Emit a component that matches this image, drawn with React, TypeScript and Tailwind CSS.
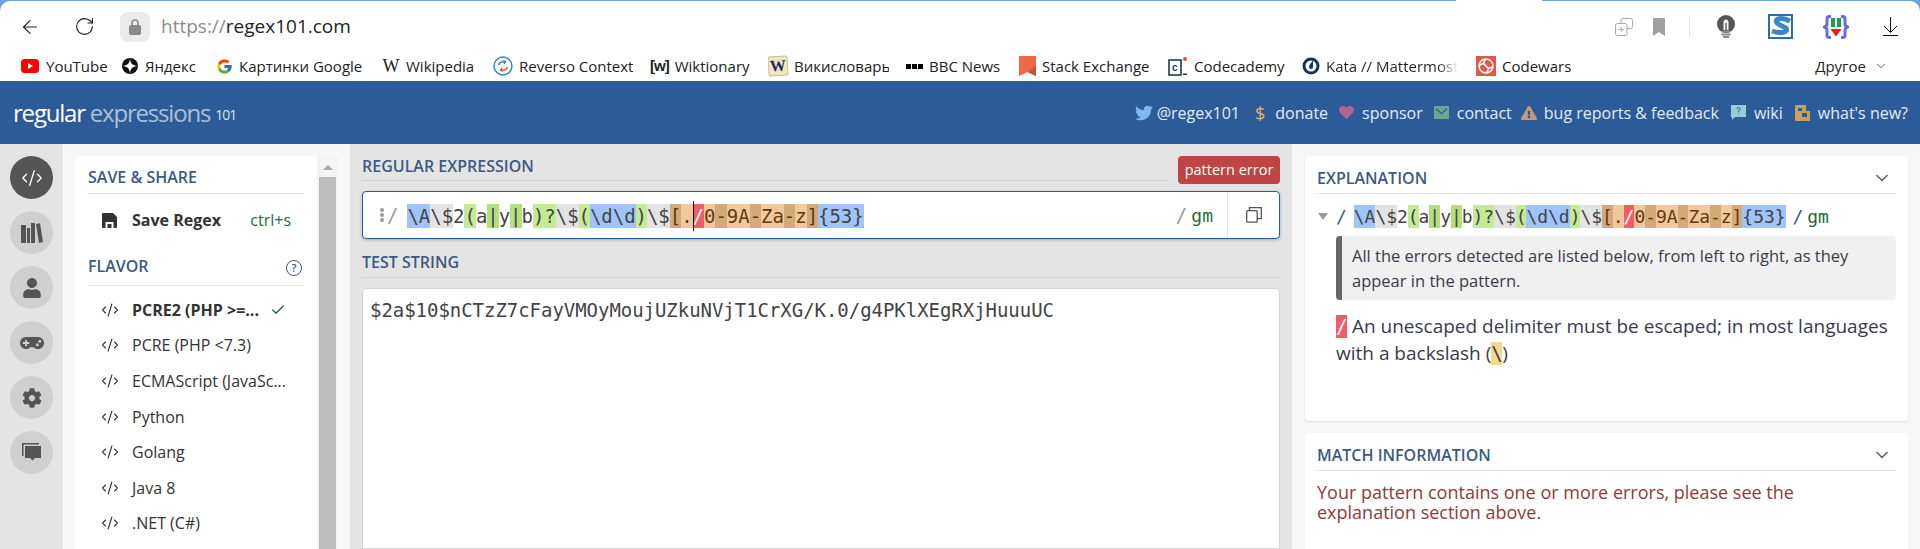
import React from "react";
import { ArrowLeft, RotateCw, ChevronDown, Check, CodeXml } from "lucide-react";
import { FaTwitter, FaHeart, FaUser, FaCog, FaGamepad, FaExclamationTriangle } from "react-icons/fa";
import { FcGoogle } from "react-icons/fc";

const sans = "font-['Open_Sans',sans-serif]";
const mono = "font-['DejaVu_Sans_Mono',monospace]";

const blue = "bg-[#9fc3fb]";
const gray = "bg-[#e3e3e3]";
const green = "bg-[#c5ea94]";
const dark = "bg-[#d5a878] text-[#5f3a10]";
const light = "bg-[#f0c89c] text-[#5f3a10]";
const red = "bg-[#f25c68] text-white";

const tokens: [string, string][] = [
  ["\\A", blue], ["\\$", gray], ["2", ""], ["(", green], ["a", ""], ["|", "bg-[#b4df7c]"], ["y", ""], ["|", "bg-[#b4df7c]"], ["b", ""],
  [")?", green], ["\\$", gray], ["(", green], ["\\d\\d", blue], [")", green], ["\\$", gray],
  ["[", dark], [".", light], ["/", red], ["0", light], ["-", dark], ["9A", light], ["-", dark], ["Za", light], ["-", dark], ["z", light], ["]", dark],
  ["{53}", blue],
];

const Regex = ({ cursor }: { cursor?: boolean }) => (
  <span className="whitespace-pre">
    {tokens.map(([t, c], i) => (
      <span key={i} className={`relative inline-block ${c}`}>
        {cursor && i === 17 && <span className="absolute left-0 top-[-3px] bottom-[-3px] w-px bg-black" />}
        {t}
      </span>
    ))}
  </span>
);

const bookmarks: { label: string; cls: string; labelCls?: string; icon: React.ReactNode }[] = [
  {
    label: "YouTube",
    cls: "ml-[20px] w-[90px]",
    icon: (
      <svg width="20" height="16" viewBox="0 0 20 16">
        <rect x="1" y="1" width="18" height="14" rx="3.5" fill="#f00" />
        <path d="M8 5l5 3-5 3z" fill="#fff" />
      </svg>
    ),
  },
  {
    label: "Яндекс",
    cls: "ml-[11px] w-[77px]",
    icon: (
      <svg width="18" height="18" viewBox="0 0 18 18">
        <circle cx="9" cy="9" r="8" fill="#111" />
        <path d="M9 1.5C9.5 6.5 11.5 8.5 16.5 9 11.5 9.5 9.5 11.5 9 16.5 8.5 11.5 6.500 9.5 1.500 9 6.500 8.500 8.500 6.500 9 1.500z" fill="#fff" />
      </svg>
    ),
  },
  { label: "Картинки Google", cls: "ml-[18px] w-[150px]", icon: <FcGoogle size={17} /> },
  {
    label: "Wikipedia",
    cls: "ml-[16px] w-[94px]",
    icon: <span className="font-['Liberation_Serif',serif] text-[18px] text-[#222] w-[18px] text-center">W</span>,
  },
  {
    label: "Reverso Context",
    cls: "ml-[17px] w-[141px]",
    icon: (
      <svg width="20" height="20" viewBox="0 0 20 20" fill="none">
        <circle cx="10" cy="10" r="9" stroke="#2a86c8" strokeWidth="1.4" />
        <path d="M5 9c.500-3 3-4.500 6-3.500L9.500 3.800l3.800 1.800-2 3.200-.5-2C8.500 6 6.800 7 6.500 9z" fill="#2a6fb5" />
        <path d="M15 11c-.500 3-3 4.500-6 3.500l1.500 1.700-3.800-1.800 2-3.200.5 2c2.300.8 4-.2 4.300-2.200z" fill="#e0452f" />
      </svg>
    ),
  },
  {
    label: "Wiktionary",
    cls: "ml-[16px] w-[102px]",
    icon: <span className="font-['Liberation_Sans',sans-serif] text-[15px] font-bold tracking-[-1px] text-[#222]">[w]</span>,
  },
  {
    label: "Викисловарь",
    cls: "ml-[16px] w-[121px]",
    icon: (
      <span className="flex w-[20px] h-[20px] items-center justify-center bg-[#efe6c0] border border-[#c9bd8f] rotate-[-4deg] rounded-[2px] font-['Liberation_Serif',serif] text-[16px] font-bold text-[#1c2a6b]">
        W
      </span>
    ),
  },
  {
    label: "BBC News",
    cls: "ml-[17px] w-[96px]",
    icon: (
      <span className="flex gap-px">
        <span className="w-[5px] h-[5px] bg-black" />
        <span className="w-[5px] h-[5px] bg-black" />
        <span className="w-[5px] h-[5px] bg-black" />
      </span>
    ),
  },
  {
    label: "Stack Exchange",
    cls: "ml-[17px] w-[133px]",
    icon: (
      <svg width="17" height="20" viewBox="0 0 17 20">
        <path d="M0 0h17v20l-8.500-4L0 20z" fill="#ee6a44" />
        <path d="M17 10v10l-8.500-4z" fill="#c9553a" />
      </svg>
    ),
  },
  {
    label: "Codecademy",
    cls: "ml-[16px] w-[118px]",
    icon: (
      <svg width="20" height="20" viewBox="0 0 20 20">
        <rect x="1" y="4" width="12" height="15" fill="#fff" stroke="#1f3a55" strokeWidth="1.600" />
        <text x="4" y="15" fontSize="10" fontWeight="700" fill="#1f3a55" fontFamily="Liberation Sans">c</text>
        <circle cx="17" cy="3" r="2" fill="#f2483a" />
        <rect x="15" y="17.500" width="4" height="1.500" fill="#1f3a55" />
      </svg>
    ),
  },
  {
    label: "Kata // Mattermost",
    cls: "ml-[16px] w-[158px]",
    labelCls: "min-w-0 overflow-hidden bg-gradient-to-r from-[#222] from-85% to-transparent bg-clip-text text-transparent",
    icon: (
      <svg width="18" height="18" viewBox="0 0 18 18" fill="none">
        <circle cx="9" cy="9" r="7" stroke="#16325c" strokeWidth="3" />
        <path d="M11 3.500v6.500a2 2 0 0 1-4 0c0-2 2-4 4-6.500z" fill="#16325c" />
      </svg>
    ),
  },
  {
    label: "Codewars",
    cls: "ml-[16px] w-[95px]",
    icon: (
      <svg width="20" height="20" viewBox="0 0 20 20" fill="none">
        <rect width="20" height="20" fill="#e0574b" />
        <circle cx="10" cy="10" r="7" stroke="#fff" strokeWidth="1.500" />
        <path d="M10 3c-3 3-3 5 0 7s3 4 0 7M3 10c3-3 5-3 7 0s4 3 7 0" stroke="#fff" strokeWidth="1.500" />
      </svg>
    ),
  },
];

const BrowserChrome = () => (
  <div className="relative bg-[#6fa3dc] pt-px shrink-0">
    <span className="absolute left-[1456px] top-0 h-px w-[86px] bg-white" />
    <div className="bg-white rounded-t-[10px] h-[80px] flex flex-col">
      <div className="flex items-center h-[51px] pl-[19px] pr-[22px]">
        <ArrowLeft size={22} strokeWidth={1.300} className="text-[#222]" />
        <RotateCw size={21} strokeWidth={1.300} className="ml-[33px] text-[#222]" />
        <div className="ml-[25px] w-[30px] h-[30px] rounded-lg bg-[#ebebeb] flex items-center justify-center">
          <svg width="14" height="18" viewBox="0 0 14 18" fill="none">
            <path d="M4 8V5a3 3 0 0 1 6 0v3" stroke="#8a8a8a" strokeWidth="1.600" />
            <rect x="1" y="7" width="12" height="10" rx="2" fill="#8a8a8a" />
          </svg>
        </div>
        <span className={`ml-[11px] text-[19px] ${sans} text-[#222]`}>
          <span className="text-[#8c8c8c]">https://</span>regex101.com
        </span>
        <div className="ml-auto flex items-center">
          <svg width="18" height="18" viewBox="0 0 18 18" fill="none" stroke="#a8a8a8" strokeWidth="1">
            <rect x="0.500" y="5.500" width="11.500" height="12" rx="2" />
            <path d="M6 5.500V2.500a2 2 0 0 1 2-2h7.500a2 2 0 0 1 2 2v6a2 2 0 0 1-2 2H12" />
            <path d="M3.500 11.500h5.500M6.250 8.800v5.500" />
          </svg>
          <svg width="12" height="18" viewBox="0 0 12 18" className="ml-[20px]">
            <path d="M0 1a1 1 0 0 1 1-1h10a1 1 0 0 1 1 1v17l-6-4-6 4z" fill="#a0a0a0" />
          </svg>
          <span className="ml-[24px] w-px h-[20px] bg-[#e6e6e6]" />
          <svg width="18" height="23" viewBox="0 0 18 23" className="ml-[27px]">
            <circle cx="9" cy="9" r="9" fill="#555" />
            <path d="M6.500 7a2.500 2.500 0 0 1 5 0v8h-5z" fill="#f4f4f4" />
            <rect x="8" y="8" width="2" height="7" fill="#888" />
            <rect x="4.500" y="15.500" width="9" height="2" fill="#8a8a8a" />
            <rect x="4.500" y="18.500" width="9" height="2" fill="#8a8a8a" />
            <rect x="6" y="21" width="6" height="2" fill="#8a8a8a" />
          </svg>
          <svg width="25" height="25" viewBox="0 0 25 25" className="ml-[33px]">
            <rect x="1" y="1" width="23" height="23" fill="#fff" stroke="#2d6ca8" strokeWidth="2" />
            <path d="M22 7c-4-2-9-3-12-2-3 1.500-2 4 2 6s8 3 6 6c-2 2-8 2-14 0" fill="none" stroke="#3b86c4" strokeWidth="5" />
          </svg>
          <svg width="26" height="24" viewBox="0 0 26 24" fill="none" className="ml-[30px]">
            <path d="M8 1.500H6.500A2.500 2.500 0 0 0 4 4v4.500c0 2-1 3-2.500 3.500C3 12.500 4 13.500 4 15.500V20a2.500 2.500 0 0 0 2.500 2.500H8" stroke="#6a6ae0" strokeWidth="3" />
            <path d="M18 1.500h1.500A2.500 2.500 0 0 1 22 4v4.500c0 2 1 3 2.500 3.500-1.500.5-2.500 1.500-2.500 3.500V20a2.500 2.500 0 0 1-2.500 2.500H18" stroke="#6a6ae0" strokeWidth="3" />
            <rect x="8" y="3" width="4" height="9" fill="#1f9e4a" />
            <rect x="14" y="3" width="4" height="9" fill="#1f9e4a" />
            <path d="M7.500 14h11L13 21.500z" fill="#f41818" />
          </svg>
          <svg width="15" height="19" viewBox="0 0 15 19" fill="none" stroke="#111" strokeWidth="1" className="ml-[34px]">
            <path d="M7.500 0v15M1 9l6.500 6.500L14 9M0 18.500h15" />
          </svg>
        </div>
      </div>
      <div className={`flex items-center h-[28px] text-[15px] text-[#222] ${sans}`}>
        {bookmarks.map((b) => (
          <div key={b.label} className={`flex items-center gap-[6px] shrink-0 overflow-hidden whitespace-nowrap ${b.cls}`}>
            <span className="shrink-0 flex items-center">{b.icon}</span>
            <span className={b.labelCls}>{b.label}</span>
          </div>
        ))}
        <div className="ml-auto mr-[32px] flex items-center gap-[8px]">
          <span>Другое</span>
          <ChevronDown size={14} strokeWidth={1.200} />
        </div>
      </div>
    </div>
  </div>
);

const navLinks: { label: string; cls: string; icon: React.ReactNode }[] = [
  { label: "@regex101", cls: "gap-[4px]", icon: <FaTwitter size={18} className="text-[#7fb7ee]" /> },
  { label: "donate", cls: "ml-[15px] gap-[10px]", icon: <span className="text-[#e4b45e] text-[18px] leading-none">$</span> },
  { label: "sponsor", cls: "ml-[11px] gap-[8px]", icon: <FaHeart size={15} className="text-[#b0649a]" /> },
  {
    label: "contact",
    cls: "ml-[11px] gap-[8px]",
    icon: (
      <svg width="15" height="13" viewBox="0 0 15 13">
        <rect width="15" height="13" fill="#6ea58f" />
        <path d="M2 3l5.500 4.500L13 3" fill="none" stroke="#2c5c97" strokeWidth="1.300" />
      </svg>
    ),
  },
  { label: "bug reports & feedback", cls: "ml-[9px] gap-[7px]", icon: <FaExclamationTriangle size={16} className="text-[#c49a7a]" /> },
  {
    label: "wiki",
    cls: "ml-[12px] gap-[8px]",
    icon: (
      <svg width="15" height="15" viewBox="0 0 15 15">
        <path d="M0 0h15v12H4l-3 3v-3H0z" fill="#93cdd6" />
        <path d="M6 4a1.500 1.500 0 1 1 2 1.500c-.5.3-.5.5-.5 1.500" fill="none" stroke="#2c5c97" strokeWidth="1" />
        <rect x="7" y="8" width="1" height="1" fill="#2c5c97" />
      </svg>
    ),
  },
  {
    label: "what's new?",
    cls: "ml-[12px] gap-[8px]",
    icon: (
      <svg width="15" height="16" viewBox="0 0 15 16">
        <rect width="11" height="16" rx="1" fill="#c9a055" />
        <rect x="11" y="6" width="4" height="10" fill="#c9a055" />
        <rect x="3" y="3" width="4" height="3" fill="#2c5c97" />
        <rect x="7" y="8" width="5" height="4" fill="#2c5c97" />
      </svg>
    ),
  },
];

const SiteHeader = () => (
  <div className={`h-[63px] shrink-0 bg-[#2c5c97] flex items-center pl-[13px] pr-[12px] ${sans}`}>
    <span className="text-[24px] tracking-[-1.200px] text-white">regular</span>
    <span className="ml-[5px] text-[24px] tracking-[-1.200px] text-[#a9c0da]">expressions</span>
    <span className="ml-[5px] mt-[4px] text-[14px] tracking-[-1px] text-[#dce6f0]">101</span>
    <div className="ml-auto flex items-center text-[16px] text-[#e2ebf4]">
      {navLinks.map((n) => (
        <div key={n.label} className={`flex items-center ${n.cls}`}>
          {n.icon}
          <span>{n.label}</span>
        </div>
      ))}
    </div>
  </div>
);

const Rail = () => (
  <div className="w-[63px] shrink-0 bg-[#e4e4e4] flex flex-col items-center pt-[12px] gap-[12px]">
    <div className="w-[43px] h-[43px] rounded-full bg-[#555] text-white flex items-center justify-center">
      <CodeXml size={22} strokeWidth={1.500} />
    </div>
    <div className="w-[43px] h-[43px] rounded-full bg-[#cfcfcf] flex items-center justify-center">
      <svg width="22" height="20" viewBox="0 0 22 20" fill="#555">
        <rect x="0" y="2" width="5" height="18" rx="0.800" />
        <rect x="6" y="5" width="3" height="15" />
        <rect x="10" y="0" width="4" height="20" />
        <path d="M15 1l4-.800L22 19l-4 1z" />
      </svg>
    </div>
    <div className="w-[43px] h-[43px] rounded-full bg-[#cfcfcf] flex items-center justify-center">
      <FaUser size={20} className="text-[#555]" />
    </div>
    <div className="w-[43px] h-[43px] rounded-full bg-[#cfcfcf] flex items-center justify-center">
      <FaGamepad size={24} className="text-[#555]" />
    </div>
    <div className="w-[43px] h-[43px] rounded-full bg-[#cfcfcf] flex items-center justify-center">
      <FaCog size={20} className="text-[#555]" />
    </div>
    <div className="w-[43px] h-[43px] rounded-full bg-[#cfcfcf] flex items-center justify-center">
      <svg width="20" height="20" viewBox="0 0 20 20" fill="#555">
        <path d="M0 0h17v1.500H1.500V13H0z" />
        <path d="M3 3h16v12h-6l-2.500 2.500L8 15H3z" />
      </svg>
    </div>
  </div>
);

const flavors = ["PCRE2 (PHP >=...", "PCRE (PHP <7.3)", "ECMAScript (JavaSc...", "Python", "Golang", "Java 8", ".NET (C#)"];

const SidePanel = () => (
  <div className={`w-[287px] shrink-0 bg-[#f7f7f7] pt-[12px] px-[12px] ${sans}`}>
    <div className="h-full bg-white rounded-t-[4px] flex">
      <div className="flex-1 min-w-0 pl-[13px] pr-[13px]">
        <div className="h-[38px] pb-[4px] flex items-end border-b border-[#e5e5e5] text-[16px] font-semibold text-[#3d5a80]">SAVE &amp; SHARE</div>
        <div className="h-[52px] flex items-center pl-[14px] text-[16px] text-[#333]">
          <svg width="15" height="15" viewBox="0 0 15 15" fill="#333">
            <path d="M0 1a1 1 0 0 1 1-1h10l4 4v10a1 1 0 0 1-1 1H1a1 1 0 0 1-1-1z" />
            <rect x="3.500" y="9" width="8" height="6" fill="#fff" />
            <rect x="5.500" y="11" width="4" height="4" fill="#333" />
          </svg>
          <span className="ml-[15px] font-bold">Save Regex</span>
          <span className="ml-auto pr-[13px] text-[#1f6b3a]">ctrl+s</span>
        </div>
        <div className="h-[36px] mt-[4px] pb-[3px] flex items-center justify-between border-b border-[#e5e5e5] text-[16px] font-semibold text-[#3d5a80]">
          <span>FLAVOR</span>
          <span className="w-[16px] h-[16px] mt-[3px] mr-[2px] rounded-full border-[1.500px] border-[#3d5a80] text-[11px] leading-none flex items-center justify-center">?</span>
        </div>
        <div className="pt-[6px]">
          {flavors.map((f, i) => (
            <div key={f} className={`h-[35.600px] flex items-center pl-[13px] text-[16px] text-[#333] whitespace-nowrap ${i === 0 ? "font-bold" : ""}`}>
              <CodeXml size={18} strokeWidth={1.500} className="shrink-0" />
              <span className="ml-[13px]">{f}</span>
              {i === 0 && <Check size={16} strokeWidth={2} className="ml-[11px] text-[#1f6b3a]" />}
            </div>
          ))}
        </div>
      </div>
      <div className="w-[21px] shrink-0 bg-[#f4f4f4] flex flex-col items-center pt-[9px]">
        <span className="w-0 h-0 border-x-[5px] border-x-transparent border-b-[5px] border-b-[#aaa]" />
        <span className="mt-[7px] w-[17px] flex-1 bg-[#bdbdbd]" />
      </div>
    </div>
  </div>
);

const MainColumn = () => (
  <div className={`w-[942px] shrink-0 bg-[#e4e4e4] px-[12px] flex flex-col ${sans}`}>
    <div className="relative h-[37px] flex items-end">
      <div className="flex-1 mr-[112px] border-b border-[#d2d2d2] h-[25px] text-[16px] font-semibold text-[#3d5a80] leading-[20px]">REGULAR EXPRESSION</div>
      <span className="absolute right-0 top-[12px] h-[28px] w-[102px] rounded-[4px] bg-[#c04444] text-white text-[14.500px] flex items-center justify-center">pattern error</span>
    </div>
    <div className="mt-[10px] h-[48px] bg-white border border-[#2c5c97] rounded-[4px] shadow-[0_1px_3px_rgba(44,92,151,0.4)] flex items-center">
      <span className="ml-[17px] flex flex-col gap-[1px]">
        <span className="w-[4px] h-[4px] rounded-full bg-[#999]" />
        <span className="w-[4px] h-[4px] rounded-full bg-[#999]" />
        <span className="w-[4px] h-[4px] rounded-full bg-[#999]" />
      </span>
      <span className={`ml-[3px] text-[19px] text-[#999] ${mono}`}>/</span>
      <span className={`ml-[9px] mt-[1px] text-[19px] leading-[24px] tracking-[-0.040px] text-[#444] ${mono}`}>
        <Regex cursor />
      </span>
      <span className={`ml-auto text-[19px] text-[#999] ${mono}`}>/</span>
      <span className={`ml-[4px] text-[18px] text-[#1f6b3a] ${mono}`}>gm</span>
      <span className="ml-[14px] w-[52px] h-full border-l border-[#e2e2e2] flex items-center justify-center">
        <svg width="16" height="16" viewBox="0 0 16 16" fill="none" stroke="#555" strokeWidth="1.300">
          <rect x="0.700" y="3.700" width="10.500" height="11.500" rx="1" />
          <path d="M3.500 3.500V.700h11.800v11h-4" />
        </svg>
      </span>
    </div>
    <div className="mt-[14px] h-[25px] border-b border-[#d2d2d2] text-[16px] font-semibold text-[#3d5a80] leading-[18px]">TEST STRING</div>
    <div className={`mt-[10px] flex-1 bg-white border border-[#d5d5d5] rounded-t-[4px] pl-[7px] pt-[9px] text-[19px] leading-[24px] tracking-[-0.040px] text-[#444] ${mono}`}>
      $2a$10$nCTzZ7cFayVMOyMoujUZkuNVjT1CrXG/K.0/g4PKlXEgRXjHuuuUC
    </div>
  </div>
);

const RightColumn = () => (
  <div className={`flex-1 min-w-0 bg-[#f7f7f7] pt-[12px] pl-[13px] pr-[12px] flex flex-col gap-[12px] ${sans}`}>
    <div className="h-[265px] shrink-0 bg-white rounded-[4px] shadow-[0_1px_2px_rgba(0,0,0,0.1)] px-[12px]">
      <div className="h-[38px] pb-[3px] flex items-end justify-between border-b border-[#e5e5e5] text-[16px] font-semibold text-[#3d5a80]">
        <span>EXPLANATION</span>
        <ChevronDown size={20} strokeWidth={2} className="text-[#666] mr-[4px] mb-[2px]" />
      </div>
      <div className={`mt-[11px] flex items-center text-[18px] leading-[23px] tracking-[-0.050px] text-[#444] ${mono}`}>
        <span className="ml-[1px] w-0 h-0 border-x-[5px] border-x-transparent border-t-[7px] border-t-[#999]" />
        <span className="ml-[8px] text-[#3d5a80]">/</span>
        <span className="ml-[7px]">
          <Regex />
        </span>
        <span className="ml-[7px] text-[#3d5a80]">/</span>
        <span className="ml-[4px] text-[#1f6b3a]">gm</span>
      </div>
      <div className="mt-[8px] ml-[19px] h-[64px] bg-[#f0f0f0] border-l-[6px] border-[#666] rounded-[4px] pl-[10px] flex items-center text-[16.500px] leading-[25px] text-[#3a3a4a]">
        <div>All the errors detected are listed below, from left to right, as they<br />appear in the pattern.</div>
      </div>
      <div className="mt-[13px] ml-[19px] text-[19px] leading-[27px] text-[#3a3a4a]">
        <span className={`${red} inline-block w-[11px] h-[23px] leading-[23px] text-center ${mono}`}>/</span> An unescaped delimiter must be escaped; in most languages<br />with a backslash (<span className={`bg-[#f3d98b] inline-block w-[11px] h-[23px] leading-[23px] text-center ${mono}`}>\</span>)
      </div>
    </div>
    <div className="flex-1 bg-white rounded-t-[4px] px-[12px]">
      <div className="h-[38px] pb-[3px] flex items-end justify-between border-b border-[#e5e5e5] text-[16px] font-semibold text-[#3d5a80]">
        <span>MATCH INFORMATION</span>
        <ChevronDown size={20} strokeWidth={2} className="text-[#666] mr-[4px] mb-[2px]" />
      </div>
      <div className="mt-[11px] text-[18px] leading-[20px] text-[#8f3a3a]">
        Your pattern contains one or more errors, please see the<br />explanation section above.
      </div>
    </div>
  </div>
);

const App: React.FC = () => {
  return (
    <div className="w-[1920px] h-[549px] overflow-hidden flex flex-col bg-white">
      <BrowserChrome />
      <SiteHeader />
      <div className="flex-1 min-h-0 flex">
        <Rail />
        <SidePanel />
        <MainColumn />
        <RightColumn />
      </div>
    </div>
  );
};

export default App;
